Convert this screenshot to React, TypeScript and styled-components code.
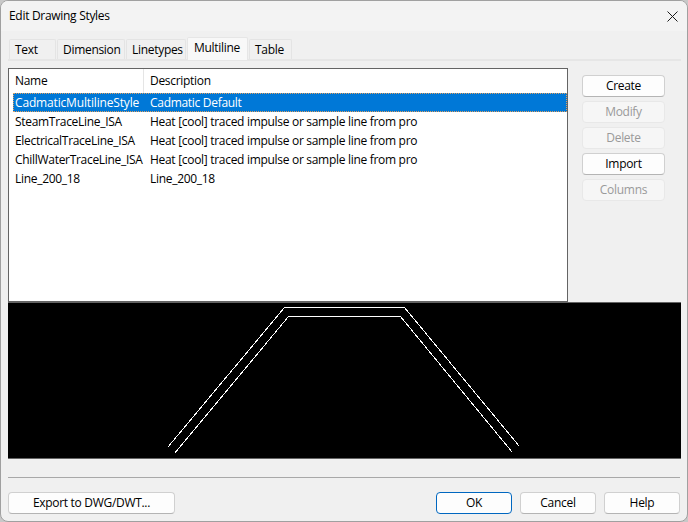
import React from 'react';
import styled, { createGlobalStyle } from 'styled-components';

const GlobalStyle = createGlobalStyle`
  html, body {
    margin: 0;
    padding: 0;
    background: #c8c8c8;
  }
  body {
    font-family: "Open Sans", "Noto Sans", "Liberation Sans", sans-serif;
    font-size: 12px;
    letter-spacing: -0.3px;
    color: #000;
  }
`;

const TABS = ['Text', 'Dimension', 'Linetypes', 'Multiline', 'Table'];
const TAB_WIDTHS = [47, 68, 60, 61, 43];

const ROWS = [
  ['CadmaticMultilineStyle', 'Cadmatic Default'],
  ['SteamTraceLine_ISA', 'Heat [cool] traced impulse or sample line from pro'],
  ['ElectricalTraceLine_ISA', 'Heat [cool] traced impulse or sample line from pro'],
  ['ChillWaterTraceLine_ISA', 'Heat [cool] traced impulse or sample line from pro'],
  ['Line_200_18', 'Line_200_18'],
];

const SIDE_BUTTONS = [
  { label: 'Create', disabled: false },
  { label: 'Modify', disabled: true },
  { label: 'Delete', disabled: true },
  { label: 'Import', disabled: false },
  { label: 'Columns', disabled: true },
];

const App = () => {
  return (
    <Window>
      <GlobalStyle />
      <TitleBar>
        <Title>Edit Drawing Styles</Title>
        <CloseIcon width="11" height="11" viewBox="0 0 11 11">
          <path d="M0.5 0.5 L10.5 10.5 M10.5 0.5 L0.5 10.5" stroke="#1a1a1a" strokeWidth="1" fill="none" />
        </CloseIcon>
      </TitleBar>

      <Body>
        <TabStrip>
          {TABS.map((tab, i) => (
            <Tab key={tab} $active={tab === 'Multiline'} style={{ width: TAB_WIDTHS[i] }}>
              {tab}
            </Tab>
          ))}
        </TabStrip>

        <ListRow>
          <List>
            <ListHeader>
              <NameHead>Name</NameHead>
              <DescHead>Description</DescHead>
            </ListHeader>
            {ROWS.map(([name, desc], i) => (
              <Row key={name} $selected={i === 0}>
                <NameCell $selected={i === 0}>{name}</NameCell>
                <DescCell>{desc}</DescCell>
              </Row>
            ))}
          </List>
          <SideButtons>
            {SIDE_BUTTONS.map((b) => (
              <SideButton key={b.label} disabled={b.disabled}>
                {b.label}
              </SideButton>
            ))}
          </SideButtons>
        </ListRow>

        <Preview>
          {/* viewBox uses window coordinates so the points read straight off the screenshot */}
          <svg width="673" height="155" viewBox="8 303 673 155" shapeRendering="crispEdges">
            <polyline
              points="167.5,447.5 284.5,307.5 404.5,307.5 519.5,446.5"
              fill="none"
              stroke="#fff"
              strokeWidth="1"
            />
            <polyline
              points="174.5,453.5 288.5,316.5 400.5,316.5 512.5,452.5"
              fill="none"
              stroke="#fff"
              strokeWidth="1"
            />
          </svg>
        </Preview>

        <Separator />

        <Footer>
          <ExportButton>Export to DWG/DWT...</ExportButton>
          <FooterRight>
            <FooterButton $primary>OK</FooterButton>
            <FooterButton>Cancel</FooterButton>
            <FooterButton>Help</FooterButton>
          </FooterRight>
        </Footer>
      </Body>
    </Window>
  );
};

const Window = styled.div`
  width: 688px;
  height: 522px;
  box-sizing: border-box;
  display: flex;
  flex-direction: column;
  background: #f0f0f0;
  border: 1px solid #a0a0a0;
  border-radius: 8px;
  overflow: hidden;
`;

const TitleBar = styled.div`
  height: 30px;
  flex: none;
  display: flex;
  align-items: center;
  justify-content: space-between;
  padding: 0 9px 0 8px;
  background: #f3f3f3;
`;

const Title = styled.span`
  font-size: 12px;
  line-height: 30px;
`;

const CloseIcon = styled.svg`
  display: block;
`;

const Body = styled.div`
  flex: 1;
  display: flex;
  flex-direction: column;
  padding: 6px 6px 0 7px;
`;

const TabStrip = styled.div`
  display: flex;
  align-items: flex-end;
  gap: 1px;
  height: 22px;
  padding-left: 1px;
  border-bottom: 2px solid #e6e6e6;
`;

const Tab = styled.div<{ $active?: boolean }>`
  box-sizing: border-box;
  height: ${(p) => (p.$active ? 23 : 20)}px;
  margin-bottom: ${(p) => (p.$active ? -1 : 0)}px;
  padding: 2px 0 0 ${(p) => (p.$active ? 6 : 5)}px;
  line-height: 16px;
  white-space: nowrap;
  background: ${(p) => (p.$active ? '#f8f8f8' : '#f0f0f0')};
  border: 1px solid ${(p) => (p.$active ? '#e6e6e6' : '#e4e4e4')};
  border-bottom: none;
  border-radius: 2px 2px 0 0;
`;

const ListRow = styled.div`
  display: flex;
  align-items: flex-start;
  margin-top: 7px;
`;

const List = styled.div`
  box-sizing: border-box;
  width: 560px;
  height: 234px;
  background: #fff;
  border: 1px solid #646464;
`;

const ListHeader = styled.div`
  display: flex;
  height: 24px;
  line-height: 24px;
`;

const NameHead = styled.div`
  box-sizing: border-box;
  width: 135px;
  padding-left: 6px;
  border-right: 1px solid #e5e5e5;
`;

const DescHead = styled.div`
  padding-left: 6px;
`;

const Row = styled.div<{ $selected?: boolean }>`
  display: flex;
  height: 19px;
  line-height: 20px;
  margin-left: ${(p) => (p.$selected ? 4 : 0)}px;
  white-space: nowrap;
  color: ${(p) => (p.$selected ? '#fff' : '#000')};
  background: ${(p) => (p.$selected ? '#0078d7' : 'transparent')};
  outline: ${(p) => (p.$selected ? '1px dotted #e0a060' : 'none')};
  outline-offset: -1px;
`;

const NameCell = styled.div<{ $selected?: boolean }>`
  width: ${(p) => (p.$selected ? 137 : 141)}px;
  flex: none;
  padding-left: ${(p) => (p.$selected ? 2 : 6)}px;
  letter-spacing: ${(p) => (p.$selected ? -0.16 : -0.3)}px;
  box-sizing: border-box;
`;

const DescCell = styled.div`
  flex: none;
`;

const SideButtons = styled.div`
  display: flex;
  flex-direction: column;
  gap: 4px;
  margin: 7px 0 0 14px;
`;

const BaseButton = styled.button`
  box-sizing: border-box;
  height: 22px;
  padding: 0;
  font: inherit;
  letter-spacing: inherit;
  line-height: 18px;
  color: #000;
  background: #fdfdfd;
  border: 1px solid #d0d0d0;
  border-bottom-color: #b4b4b4;
  border-radius: 4px;
  &:disabled {
    color: #9a9a9a;
    background: #f6f6f6;
    border-color: #e8e8e8;
  }
`;

const SideButton = styled(BaseButton)`
  width: 83px;
`;

const Preview = styled.div`
  width: 673px;
  height: 155px;
  background: #000;
  border-top: 1px solid #646464;
  border-bottom: 1px solid #646464;
  svg {
    display: block;
  }
`;

const Separator = styled.div`
  height: 1px;
  margin-top: 18px;
  width: 672px;
  background: #a8a8a8;
`;

const Footer = styled.div`
  display: flex;
  justify-content: space-between;
  width: 672px;
  margin-top: 14px;
`;

const ExportButton = styled(BaseButton)`
  width: 167px;
`;

const FooterRight = styled.div`
  display: flex;
  gap: 8px;
`;

const FooterButton = styled(BaseButton)<{ $primary?: boolean }>`
  width: 76px;
  ${(p) => (p.$primary ? 'border: 1px solid #0067c0;' : '')}
`;

export default App;
